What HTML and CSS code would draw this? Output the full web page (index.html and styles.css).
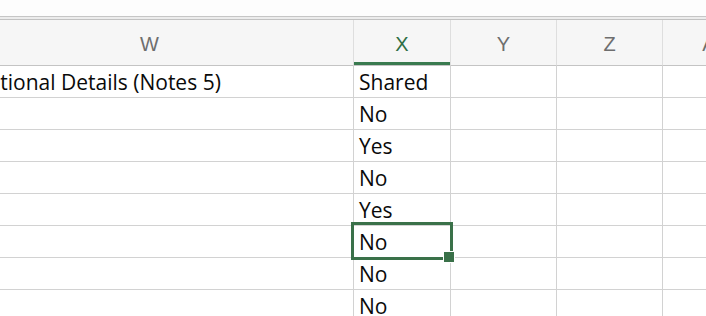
FILE: index.html
```html
<!DOCTYPE html>
<html>
<head>
<meta charset="utf-8">
<link rel="stylesheet" href="styles.css">
</head>
<body>
<div class="sheet">
  <div class="top-space"></div>
  <div class="rule"></div>
  <div class="grid">
    <div class="hcell">W</div>
    <div class="hcell active">X</div>
    <div class="hcell">Y</div>
    <div class="hcell">Z</div>
    <div class="hcell last">AA</div>

    <div class="cell wide">Additional Details (Notes 5)</div>
    <div class="cell">Shared</div>
    <div class="cell"></div><div class="cell"></div><div class="cell last"></div>

    <div class="cell wide"></div>
    <div class="cell">No</div>
    <div class="cell"></div><div class="cell"></div><div class="cell last"></div>

    <div class="cell wide"></div>
    <div class="cell">Yes</div>
    <div class="cell"></div><div class="cell"></div><div class="cell last"></div>

    <div class="cell wide"></div>
    <div class="cell">No</div>
    <div class="cell"></div><div class="cell"></div><div class="cell last"></div>

    <div class="cell wide"></div>
    <div class="cell">Yes</div>
    <div class="cell"></div><div class="cell"></div><div class="cell last"></div>

    <div class="cell wide"></div>
    <div class="cell selected">No<span class="sel-box"></span><span class="handle"></span></div>
    <div class="cell"></div><div class="cell"></div><div class="cell last"></div>

    <div class="cell wide"></div>
    <div class="cell">No</div>
    <div class="cell"></div><div class="cell"></div><div class="cell last"></div>

    <div class="cell wide"></div>
    <div class="cell">No</div>
    <div class="cell"></div><div class="cell"></div><div class="cell last"></div>
  </div>
</div>
</body>
</html>
```

FILE: styles.css
```css
html, body {
  margin: 0;
  padding: 0;
  background: #ffffff;
  overflow: hidden;
}

.sheet {
  width: 706px;
  height: 316px;
  overflow: hidden;
}

.top-space {
  height: 16px;
  background: #fdfdfd;
}

.rule {
  height: 2px;
  border-top: 1px solid #c6c6c6;
  border-bottom: 1px solid #c2c2c2;
  background: #ececec;
}

.grid {
  display: grid;
  grid-template-columns: 408px 97px 106px 106px 106px;
  grid-template-rows: 46px repeat(8, 32px);
  margin-left: -54px;
  width: 823px;
}

.hcell {
  background: #f6f6f6;
  border-right: 1px solid #dedede;
  border-bottom: 1px solid #c4c4c4;
  display: flex;
  align-items: center;
  justify-content: center;
  padding-top: 4px;
  font-family: "Liberation Sans", Arial, sans-serif;
  font-size: 20px;
  color: #6e6e6e;
}

.hcell.active {
  color: #2f6f46;
  box-shadow: inset 0 -3px 0 #3a7b50;
}

.cell {
  position: relative;
  border-right: 1px solid #d2d2d2;
  border-bottom: 1px solid #d2d2d2;
  display: flex;
  align-items: flex-end;
  padding: 0 0 2px 5px;
  font-family: "Open Sans", "Noto Sans", sans-serif;
  font-size: 21px;
  line-height: 26px;
  color: #0a0a0a;
  white-space: nowrap;
}

.cell.wide {
  padding-left: 10px;
  overflow: visible;
}

.cell.selected {
  z-index: 2;
}

.sel-box {
  position: absolute;
  left: -3px;
  top: -4px;
  width: 96px;
  height: 32px;
  border: 3px solid #3a7149;
}

.handle {
  position: absolute;
  left: 89px;
  top: 25px;
  width: 10px;
  height: 10px;
  background: #3a7149;
  border: 1px solid #ffffff;
}
```
